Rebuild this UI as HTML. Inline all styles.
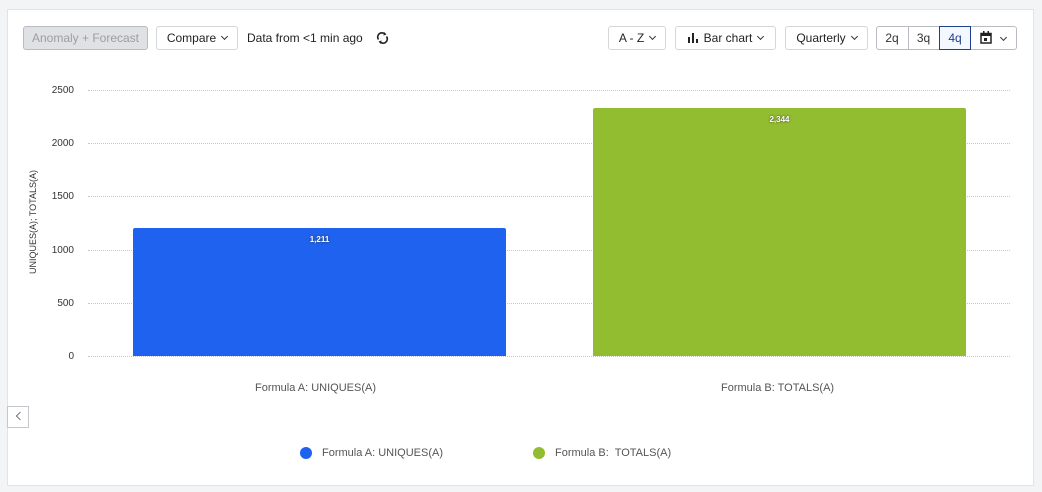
<!DOCTYPE html>
<html><head><meta charset="utf-8"><style>
*{box-sizing:border-box;margin:0;padding:0}
body{width:1042px;height:492px;background:#f3f4f6;font-family:"Liberation Sans",sans-serif;position:relative;overflow:hidden;color:#333}
.card{position:absolute;left:7px;top:9px;width:1027px;height:477px;background:#fff;border:1px solid #e1e3e6}
.btn{position:absolute;top:26px;height:24px;border:1px solid #d4d6da;border-radius:3px;background:#fff;font-size:12px;line-height:22px;color:#222;text-align:center}
.ch{display:inline-block;width:5px;height:5px;border-right:1.3px solid #333;border-bottom:1.3px solid #333;transform:rotate(45deg);margin-left:6px;position:relative;top:-3px}
.grid{position:absolute;left:88px;width:922px;border-top:1px dotted #c4c8cc}
.yl{position:absolute;right:968px;font-size:10px;color:#333;text-align:right}
.abs{position:absolute}
.val{position:absolute;font-size:8px;font-weight:bold;color:#fff;text-shadow:0 0 2px #333;width:100%;text-align:center;top:7px}
</style></head><body>
<div class="card"></div>
<div class="btn" style="left:23px;width:125px;background:#dfe1e4;border-color:#b8bcc2;color:#9a9ea5">Anomaly + Forecast</div>
<div class="btn" style="left:156px;width:82px">Compare<span class="ch"></span></div>
<div class="abs" style="left:247px;top:31px;font-size:12px;color:#222">Data from &lt;1 min ago</div>
<svg class="abs" style="left:376px;top:31px" width="13" height="14" viewBox="0 0 13 14"><path d="M2.5 8.5A4.2 4.2 0 0 1 9 3.2M10.5 5.5A4.2 4.2 0 0 1 4 10.8" fill="none" stroke="#222" stroke-width="1.6"/><path d="M8 1l2.5 2.4-3 1.2zM5 13l-2.5-2.4 3-1.2z" fill="#222"/></svg>
<div class="btn" style="left:608px;width:58px">A - Z<span class="ch"></span></div>
<div class="btn" style="left:675px;width:101px"><svg width="11" height="10" style="margin-right:5px;vertical-align:-1px"><rect x="0" y="4" width="2" height="6" fill="#222"/><rect x="4" y="0" width="2" height="10" fill="#222"/><rect x="8" y="6" width="2" height="4" fill="#222"/></svg>Bar chart<span class="ch"></span></div>
<div class="btn" style="left:785px;width:83px">Quarterly<span class="ch"></span></div>
<div class="btn" style="left:876px;width:141px;border-color:#b8bcc2"></div>
<div class="abs" style="left:876px;top:26px;width:32px;height:24px;font-size:12px;line-height:24px;text-align:center">2q</div>
<div class="abs" style="left:908px;top:27px;width:1px;height:22px;background:#b8bcc2"></div>
<div class="abs" style="left:908px;top:26px;width:31px;height:24px;font-size:12px;line-height:24px;text-align:center">3q</div>
<div class="abs" style="left:939px;top:26px;width:32px;height:24px;border:1px solid #1d3f8f;background:#f3f7ff;font-size:12px;line-height:22px;text-align:center;color:#1d3f8f">4q</div>
<svg class="abs" style="left:980px;top:31px" width="12" height="13"><rect x="1" y="2.5" width="10" height="9.5" fill="none" stroke="#222" stroke-width="1.5"/><rect x="1" y="2.5" width="10" height="2.5" fill="#222"/><rect x="3" y="0" width="1.5" height="3" fill="#222"/><rect x="7.5" y="0" width="1.5" height="3" fill="#222"/><rect x="4" y="7" width="3" height="3" fill="#222"/></svg>
<span class="ch abs" style="left:995px;top:35px"></span>

<div class="grid" style="top:90px"></div><div class="yl" style="top:85px">2500</div>
<div class="grid" style="top:143px"></div><div class="yl" style="top:138px">2000</div>
<div class="grid" style="top:196px"></div><div class="yl" style="top:191px">1500</div>
<div class="grid" style="top:250px"></div><div class="yl" style="top:245px">1000</div>
<div class="grid" style="top:303px"></div><div class="yl" style="top:298px">500</div>
<div class="grid" style="top:356px"></div><div class="yl" style="top:351px">0</div>
<div class="abs" style="left:33px;top:222px;font-size:9px;color:#333;transform:translate(-50%,-50%) rotate(-90deg);white-space:nowrap;transform-origin:center">UNIQUES(A); TOTALS(A)</div>

<div class="abs" style="left:133px;top:228px;width:373px;height:128px;background:#1f62f0;border-radius:2px 2px 0 0"><div class="val">1,211</div></div>
<div class="abs" style="left:593px;top:108px;width:373px;height:248px;background:#93bd31;border-radius:2px 2px 0 0"><div class="val">2,344</div></div>

<div class="abs" style="left:255px;top:382px;font-size:11px;color:#555">Formula A: UNIQUES(A)</div>
<div class="abs" style="left:721px;top:382px;font-size:11px;color:#555">Formula B: TOTALS(A)</div>

<div class="abs" style="left:7px;top:406px;width:22px;height:22px;border:1px solid #c4c8cc;background:#fff"></div>
<div class="abs" style="left:17px;top:413px;width:6px;height:6px;border-left:1.3px solid #777;border-bottom:1.3px solid #777;transform:rotate(45deg)"></div>

<div class="abs" style="left:300px;top:447px;width:12px;height:12px;border-radius:50%;background:#1f62f0"></div>
<div class="abs" style="left:322px;top:447px;font-size:11px;color:#555">Formula A: UNIQUES(A)</div>
<div class="abs" style="left:533px;top:447px;width:12px;height:12px;border-radius:50%;background:#93bd31"></div>
<div class="abs" style="left:555px;top:447px;font-size:11px;color:#555;white-space:pre">Formula B:  TOTALS(A)</div>
</body></html>
